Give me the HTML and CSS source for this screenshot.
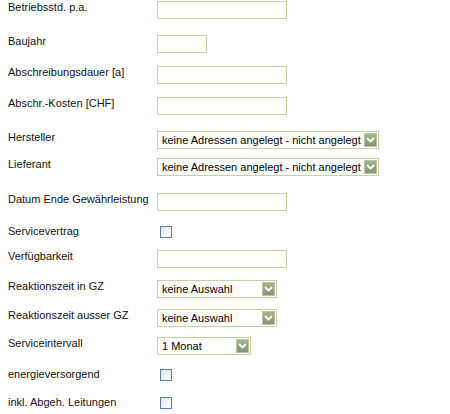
FILE: index.html
```html
<!DOCTYPE html>
<html lang="de">
<head>
<meta charset="utf-8">
<link rel="stylesheet" href="styles.css">
</head>
<body>
<form class="form">
  <label class="lbl">Betriebsstd. p.a.</label>
  <div class="ctl"><input class="txt" type="text"></div>

  <label class="lbl">Baujahr</label>
  <div class="ctl"><input class="txt txt-short" type="text"></div>

  <label class="lbl">Abschreibungsdauer [a]</label>
  <div class="ctl"><input class="txt" type="text"></div>

  <label class="lbl">Abschr.-Kosten [CHF]</label>
  <div class="ctl"><input class="txt" type="text"></div>

  <label class="lbl">Hersteller</label>
  <div class="ctl"><div class="sel sel-wide"><span class="sel-text">keine Adressen angelegt - nicht angelegt</span><span class="sel-btn"><svg width="9" height="6" viewBox="0 0 9 6"><path d="M1 1 L4.5 4.5 L8 1" fill="none" stroke="#fff" stroke-width="1.8"/></svg></span></div></div>

  <label class="lbl">Lieferant</label>
  <div class="ctl"><div class="sel sel-wide"><span class="sel-text">keine Adressen angelegt - nicht angelegt</span><span class="sel-btn"><svg width="9" height="6" viewBox="0 0 9 6"><path d="M1 1 L4.5 4.5 L8 1" fill="none" stroke="#fff" stroke-width="1.8"/></svg></span></div></div>

  <label class="lbl">Datum Ende Gewährleistung</label>
  <div class="ctl"><input class="txt" type="text"></div>

  <label class="lbl">Servicevertrag</label>
  <div class="ctl"><input class="chk" type="checkbox"></div>

  <label class="lbl">Verfügbarkeit</label>
  <div class="ctl"><input class="txt" type="text"></div>

  <label class="lbl">Reaktionszeit in GZ</label>
  <div class="ctl"><div class="sel sel-mid"><span class="sel-text">keine Auswahl</span><span class="sel-btn"><svg width="9" height="6" viewBox="0 0 9 6"><path d="M1 1 L4.5 4.5 L8 1" fill="none" stroke="#fff" stroke-width="1.8"/></svg></span></div></div>

  <label class="lbl">Reaktionszeit ausser GZ</label>
  <div class="ctl"><div class="sel sel-mid"><span class="sel-text">keine Auswahl</span><span class="sel-btn"><svg width="9" height="6" viewBox="0 0 9 6"><path d="M1 1 L4.5 4.5 L8 1" fill="none" stroke="#fff" stroke-width="1.8"/></svg></span></div></div>

  <label class="lbl">Serviceintervall</label>
  <div class="ctl"><div class="sel sel-small"><span class="sel-text">1 Monat</span><span class="sel-btn"><svg width="9" height="6" viewBox="0 0 9 6"><path d="M1 1 L4.5 4.5 L8 1" fill="none" stroke="#fff" stroke-width="1.8"/></svg></span></div></div>

  <label class="lbl">energieversorgend</label>
  <div class="ctl"><input class="chk" type="checkbox"></div>

  <label class="lbl">inkl. Abgeh. Leitungen</label>
  <div class="ctl"><input class="chk" type="checkbox"></div>
</form>
</body>
</html>
```
FILE: styles.css
```css
html, body {
  margin: 0;
  padding: 0;
  background: #fff;
}
body {
  font-family: "Liberation Sans", Arial, sans-serif;
  font-size: 11px;
  color: #111;
}
.form {
  display: grid;
  grid-template-columns: 149px auto;
  grid-template-rows: 34px 31px 31px 34px 27px 35px 32px 25px 30px 29px 28px 31px 28px auto;
  padding: 1px 0 0 8px;
  margin: 0;
}
.lbl {
  align-self: start;
  line-height: 13px;
  white-space: nowrap;
}
.ctl {
  align-self: start;
  display: flex;
}
.txt {
  -webkit-appearance: none;
  appearance: none;
  box-sizing: border-box;
  width: 130px;
  height: 18px;
  margin: 0;
  padding: 0 3px;
  border: 1px solid #c2d3a0;
  background: #fff;
  font: inherit;
  outline: none;
}
.txt-short {
  width: 50px;
}
.sel {
  box-sizing: border-box;
  height: 18px;
  display: flex;
  align-items: center;
  border: 1px solid #c2d3a0;
  background: #fff;
  padding: 0 1px 0 4px;
  color: #000;
  font-size: 11px;
}
.sel-wide { width: 222px; }
.sel-mid { width: 120px; }
.sel-small { width: 94px; }
.sel-text {
  flex: 1;
  white-space: nowrap;
  overflow: hidden;
  line-height: 15px;
}
.sel-btn {
  width: 13px;
  height: 14px;
  display: flex;
  align-items: center;
  justify-content: center;
  background: linear-gradient(#a2b38e, #84976f);
  border: 1px solid #b7c4a6;
  box-sizing: border-box;
}
.chk {
  -webkit-appearance: none;
  appearance: none;
  box-sizing: border-box;
  width: 12px;
  height: 12px;
  margin: 1px 0 0 3px;
  border: 1px solid #5a7ea8;
  background: linear-gradient(135deg, #dedfd8, #fafafa 70%);
}
```
